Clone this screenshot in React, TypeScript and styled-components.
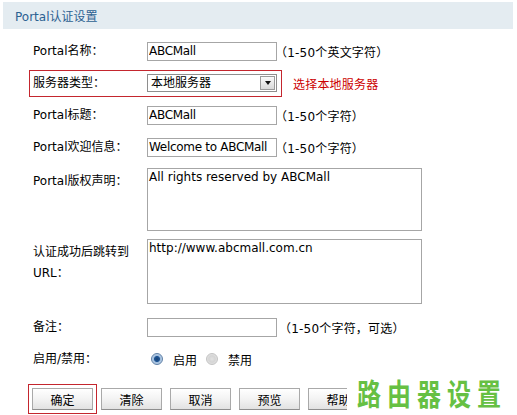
import React from "react";
import styled, { createGlobalStyle } from "styled-components";

const GlobalStyle = createGlobalStyle`
  html, body { margin: 0; padding: 0; background: #ffffff; }
  body {
    font-family: "DejaVu Sans", "Noto Sans CJK SC", sans-serif;
    font-size: 12px;
    color: #000;
  }
`;

const Page = styled.div`
  position: relative;
  width: 517px;
  height: 415px;
  padding: 2px 4px 0 3px;
  box-sizing: border-box;
  overflow: hidden;
`;

const Header = styled.div`
  height: 27px;
  background: #e4ecf1;
  display: flex;
  align-items: center;
  padding-left: 12px;
  color: #2c6192;
  font-size: 12px;
`;

const Form = styled.div`
  padding: 6px 0 0 26px;
  display: flex;
  flex-direction: column;
`;

const Row = styled.div<{ $h: number; $top?: number; $align?: string }>`
  display: flex;
  align-items: ${(p) => p.$align || "center"};
  height: ${(p) => p.$h}px;
  margin-top: ${(p) => p.$top || 0}px;
`;

const Field = styled.div<{ $mark?: boolean; $align?: string }>`
  display: flex;
  align-items: ${(p) => p.$align || "center"};
  border: 1px solid ${(p) => (p.$mark ? "#c4262e" : "transparent")};
  padding: 0 4px 0 3px;
  height: ${(p) => (p.$align === "flex-start" ? "auto" : "25px")};
`;

const Label = styled.div<{ $pt?: number }>`
  width: 114px;
  flex: none;
  line-height: 21px;
  padding-top: ${(p) => p.$pt || 0}px;
  padding-right: 10px;
  box-sizing: border-box;
`;

const TextInput = styled.input`
  width: 130px;
  height: 19px;
  box-sizing: border-box;
  border: 1px solid #a6a6a6;
  padding: 0 1px;
  margin: 0;
  font-family: "DejaVu Sans", "Noto Sans CJK SC", sans-serif;
  font-size: 12px;
  letter-spacing: -0.3px;
  color: #000;
  outline: none;
  background: #fff;
`;

const TextArea = styled.textarea<{ $h: number }>`
  width: 275px;
  height: ${(p) => p.$h}px;
  box-sizing: border-box;
  border: 1px solid #a6a6a6;
  padding: 1px 1px;
  margin: 0;
  font-family: "DejaVu Sans", "Noto Sans CJK SC", sans-serif;
  font-size: 12px;
  color: #000;
  resize: none;
  outline: none;
  overflow: hidden;
  line-height: 15px;
`;

const Select = styled.div`
  width: 130px;
  height: 18px;
  box-sizing: border-box;
  border: 1px solid #8e8e8e;
  display: flex;
  align-items: center;
  justify-content: space-between;
  padding: 0 1px 0 3px;
  background: #fff;
`;

const SelectValue = styled.span`
  font-size: 12px;
  line-height: 16px;
`;

const ArrowBox = styled.span`
  width: 15px;
  height: 14px;
  box-sizing: border-box;
  border: 1px solid #9a9a9a;
  background: linear-gradient(#fafafa, #d9d9d9);
  display: flex;
  align-items: center;
  justify-content: center;
  &::after {
    content: "";
    border-left: 3.5px solid transparent;
    border-right: 3.5px solid transparent;
    border-top: 4px solid #111;
  }
`;

const Hint = styled.span<{ $ml?: number; $red?: boolean }>`
  margin-left: ${(p) => p.$ml || 0}px;
  color: ${(p) => (p.$red ? "#cc0000" : "#000")};
  white-space: nowrap;
  letter-spacing: 0.2px;
`;

const RadioGroup = styled.div`
  display: flex;
  align-items: center;
  padding-left: 4px;
`;

const Radio = styled.span<{ $on?: boolean }>`
  width: 12px;
  height: 12px;
  box-sizing: border-box;
  border-radius: 50%;
  border: 1px solid ${(p) => (p.$on ? "#5d7fa6" : "#c3c3c3")};
  background: ${(p) =>
    p.$on
      ? "radial-gradient(circle, #173f72 0, #1f5695 2.6px, #9dbbdc 3.4px, #dfe8f2 100%)"
      : "radial-gradient(circle, #e2e2e2 0, #d4d4d4 45%, #f2f2f2 100%)"};
  margin-right: 10px;
`;

const RadioText = styled.span`
  margin-right: 9px;
`;

const Buttons = styled.div`
  display: flex;
  gap: 8px;
  margin-top: 13px;
  padding-left: 3px;
`;

const Button = styled.button<{ $mark?: boolean }>`
  width: 61px;
  height: 22px;
  box-sizing: border-box;
  border: 1px solid #a9a9a9;
  border-bottom-color: #8e8e8e;
  background: linear-gradient(#ffffff, #f3f3f3 50%, #e2e2e2);
  font-family: "DejaVu Sans", "Noto Sans CJK SC", sans-serif;
  font-size: 12px;
  color: #000;
  padding: 0;
  margin: 0;
  outline: ${(p) => (p.$mark ? "1px solid #c4262e" : "none")};
  outline-offset: 3px;
`;

const Watermark = styled.div`
  position: absolute;
  right: 0;
  bottom: 0;
  width: 170px;
  height: 47px;
  background: #ffffff;
  display: flex;
  align-items: center;
  padding-left: 10px;
  box-sizing: border-box;
`;

const WatermarkText = styled.span`
  font-family: "Noto Sans CJK SC", sans-serif;
  font-weight: 700;
  font-size: 24px;
  letter-spacing: 6px;
  color: #66c043;
  transform: scaleY(1.25);
  transform-origin: center;
  display: inline-block;
  white-space: nowrap;
`;

export default function App() {
  return (
    <>
      <GlobalStyle />
      <Page>
        <Header>Portal认证设置</Header>
        <Form>
          <Row $h={32}>
            <Field>
              <Label>Portal名称：</Label>
              <TextInput readOnly value="ABCMall" />
            </Field>
            <Hint $ml={-7}>（1-50个英文字符）</Hint>
          </Row>
          <Row $h={32}>
            <Field $mark>
              <Label>服务器类型：</Label>
              <Select>
                <SelectValue>本地服务器</SelectValue>
                <ArrowBox />
              </Select>
            </Field>
            <Hint $ml={11} $red>选择本地服务器</Hint>
          </Row>
          <Row $h={32}>
            <Field>
              <Label>Portal标题：</Label>
              <TextInput readOnly value="ABCMall" />
            </Field>
            <Hint $ml={-7}>（1-50个字符）</Hint>
          </Row>
          <Row $h={32}>
            <Field>
              <Label>Portal欢迎信息：</Label>
              <TextInput readOnly value="Welcome to ABCMall" />
            </Field>
            <Hint $ml={-7}>（1-50个字符）</Hint>
          </Row>
          <Row $h={63} $top={4} $align="flex-start">
            <Field $align="flex-start">
              <Label $pt={3}>Portal版权声明：</Label>
              <TextArea $h={63} readOnly value="All rights reserved by ABCMall" />
            </Field>
          </Row>
          <Row $h={65} $top={8} $align="flex-start">
            <Field $align="flex-start">
              <Label $pt={3}>认证成功后跳转到URL：</Label>
              <TextArea $h={65} readOnly value="http://www.abcmall.com.cn" />
            </Field>
          </Row>
          <Row $h={32} $top={8}>
            <Field>
              <Label>备注：</Label>
              <TextInput readOnly value="" />
            </Field>
            <Hint $ml={-3}>（1-50个字符，可选）</Hint>
          </Row>
          <Row $h={32}>
            <Field>
              <Label>启用/禁用：</Label>
              <RadioGroup>
                <Radio $on />
                <RadioText>启用</RadioText>
                <Radio />
                <RadioText>禁用</RadioText>
              </RadioGroup>
            </Field>
          </Row>
          <Buttons>
            <Button $mark>确定</Button>
            <Button>清除</Button>
            <Button>取消</Button>
            <Button>预览</Button>
            <Button>帮助</Button>
          </Buttons>
        </Form>
        <Watermark>
          <WatermarkText>路由器设置</WatermarkText>
        </Watermark>
      </Page>
    </>
  );
}
